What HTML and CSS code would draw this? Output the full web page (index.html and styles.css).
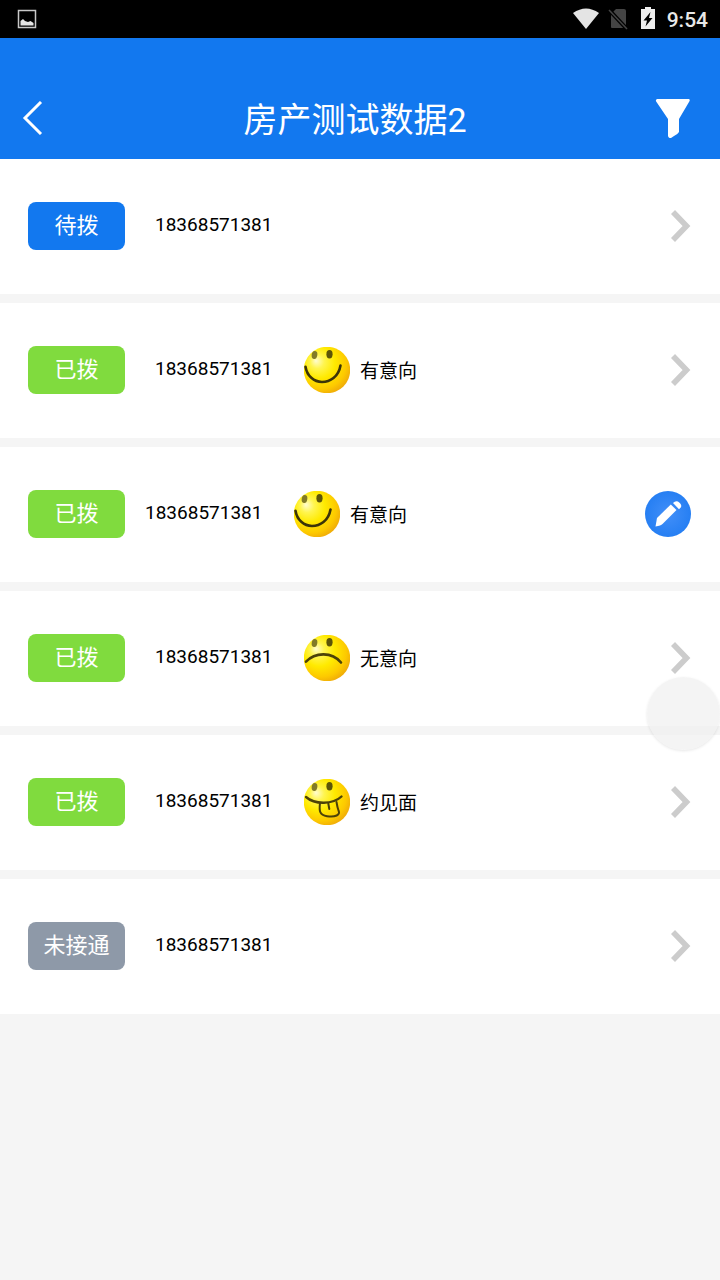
FILE: index.html
```html
<!DOCTYPE html>
<html lang="zh-CN">
<head>
<meta charset="utf-8">
<meta name="viewport" content="width=device-width, initial-scale=1">
<title>房产测试数据2</title>
<link rel="stylesheet" href="styles.css">
</head>
<body>
<svg class="defs" aria-hidden="true">
  <defs>
    <radialGradient id="face" cx="0.4" cy="0.38" r="0.68" fx="0.26" fy="0.3">
      <stop offset="0" stop-color="#fffcd0"/>
      <stop offset="0.22" stop-color="#fff550"/>
      <stop offset="0.5" stop-color="#ffea00"/>
      <stop offset="0.8" stop-color="#fdc900"/>
      <stop offset="1" stop-color="#eda60a"/>
    </radialGradient>
    <radialGradient id="pen">
      <stop offset="0" stop-color="#428ff8"/>
      <stop offset="1" stop-color="#267ff3"/>
    </radialGradient>
    <symbol id="chevron" viewBox="0 0 20 32">
      <path d="M2 2 15.500 16 2 30" fill="none" stroke="#ccc" stroke-width="5.600"/>
    </symbol>
    <symbol id="ball" viewBox="0 0 46 46">
      <circle cx="23" cy="23" r="23.2" fill="url(#face)"/>
      <ellipse cx="10.500" cy="8" rx="2.8" ry="4" fill="#817a28" transform="rotate(10 10.500 8)"/>
      <ellipse cx="25.500" cy="7.200" rx="3.1" ry="4.2" fill="#5c5408"/>
    </symbol>
    <symbol id="smile" viewBox="0 0 46 46">
      <use href="#ball"/>
      <path d="M1.500 19.700C3 29 10 35 18 35S34.500 30 36.500 18.500" fill="none" stroke="#3c3408" stroke-width="2.6" stroke-linecap="round"/>
    </symbol>
    <symbol id="frown" viewBox="0 0 46 46">
      <use href="#ball"/>
      <path d="M2 26.700C11 17 28 16.500 37 27.500" fill="none" stroke="#4c4208" stroke-width="2.6" stroke-linecap="round"/>
    </symbol>
    <symbol id="tongue" viewBox="0 0 46 46">
      <use href="#ball"/>
      <g fill="none" stroke="#4c4208" stroke-width="2.4" stroke-linecap="round">
        <path d="M2 18C11 26 29 25.500 37.500 17.500"/>
        <path d="M16 24C15 32 15.500 36 23 37.200 31 38.500 37 36 34.500 31.500 33.500 29 33 26 32.500 23M24.300 24.500 25.300 30" stroke-width="2"/>
      </g>
    </symbol>
  </defs>
</svg>

<div class="status">
  <svg class="status-photo" width="20" height="20" viewBox="0 0 20 20" aria-hidden="true">
    <path d="M1.500 1.500h17v17h-17z" fill="none" stroke="#c8c8c8" stroke-width="1.500"/>
    <path d="M3.500 16.500v-4.500l2.500-2 2 2 3 1 2.500-1 3 2v2.500z" fill="#e6e6e6"/>
  </svg>
  <svg width="28" height="24" viewBox="0 0 28 24" aria-hidden="true">
    <path d="M1 6Q14-3 27 6L14 22z" fill="#e4e4e4"/>
  </svg>
  <svg width="20" height="24" viewBox="0 0 20 24" aria-hidden="true">
    <path d="M8 2h8q2 0 2 2v16q0 1-1 1H4q-1 0-1-1V7z" fill="#444"/>
    <path d="M1 3 19 22" stroke="#000" stroke-width="4"/>
    <path d="M1 3 19 22" stroke="#444" stroke-width="1.500"/>
  </svg>
  <svg class="status-battery" width="16" height="24" viewBox="0 0 16 24" aria-hidden="true">
    <path d="M5 0h6v2h4v20H1V2h4z" fill="#eee"/>
    <path d="M10.500 5 3.500 13.500h3.500L5.500 19.500 12.500 11H9z" fill="#000"/>
  </svg>
  <time class="clock">9:54</time>
</div>

<header class="header">
  <button class="icon-button back" type="button" aria-label="返回">
    <svg width="22" height="34" viewBox="0 0 22 34"><path d="M20 1 4 17l16 16" fill="none" stroke="#fff" stroke-width="3"/></svg>
  </button>
  <h1 class="title">房产测试数据2</h1>
  <button class="icon-button" type="button" aria-label="筛选">
    <svg width="36" height="40" viewBox="0 0 36 40"><path d="M2 1h32q1.500 1 0 3L24 21v13q-1 2-5 4l-3 2q-2.500.500-3-2V21L1.500 4Q0 2 2 1z" fill="#fff"/></svg>
  </button>
</header>

<main>
  <ul class="list">
    <li class="row">
      <span class="badge badge-pending">待拨</span>
      <span class="phone">18368571381</span>
      <button class="action" type="button" aria-label="查看"><svg width="20" height="32"><use href="#chevron"/></svg></button>
    </li>
    <li class="row">
      <span class="badge badge-called">已拨</span>
      <span class="phone">18368571381</span>
      <span class="intent"><svg width="46" height="46" aria-hidden="true"><use href="#smile"/></svg><span class="intent-label">有意向</span></span>
      <button class="action" type="button" aria-label="查看"><svg width="20" height="32"><use href="#chevron"/></svg></button>
    </li>
    <li class="row row-edit">
      <span class="badge badge-called">已拨</span>
      <span class="phone">18368571381</span>
      <span class="intent"><svg width="46" height="46" aria-hidden="true"><use href="#smile"/></svg><span class="intent-label">有意向</span></span>
      <button class="action" type="button" aria-label="编辑">
        <svg width="46" height="46" viewBox="0 0 46 46">
          <circle cx="23" cy="23" r="23" fill="url(#pen)"/>
          <path d="M10.500 35.500 12 27 25.800 13.500 31.500 19 17.500 33q-1.500 1.500-7 2.500z" fill="#fff"/>
          <path d="m28 12 1.700-1.200q2.300-1.300 4.800 1 2.800 2.800 1.200 4.800l-1.700 1.700z" fill="#fff"/>
        </svg>
      </button>
    </li>
    <li class="row">
      <span class="badge badge-called">已拨</span>
      <span class="phone">18368571381</span>
      <span class="intent"><svg width="46" height="46" aria-hidden="true"><use href="#frown"/></svg><span class="intent-label">无意向</span></span>
      <button class="action" type="button" aria-label="查看"><svg width="20" height="32"><use href="#chevron"/></svg></button>
    </li>
    <li class="row">
      <span class="badge badge-called">已拨</span>
      <span class="phone">18368571381</span>
      <span class="intent"><svg width="46" height="46" aria-hidden="true"><use href="#tongue"/></svg><span class="intent-label">约见面</span></span>
      <button class="action" type="button" aria-label="查看"><svg width="20" height="32"><use href="#chevron"/></svg></button>
    </li>
    <li class="row">
      <span class="badge badge-missed">未接通</span>
      <span class="phone">18368571381</span>
      <button class="action" type="button" aria-label="查看"><svg width="20" height="32"><use href="#chevron"/></svg></button>
    </li>
  </ul>
</main>
<button class="floating" type="button" aria-label="悬浮按钮"></button>
</body>
</html>
```
FILE: styles.css
```css
* {
  box-sizing: border-box;
}

body {
  margin: 0;
  min-height: 100vh;
  background: #f5f5f5;
  color: #000;
  font-family: Roboto, "Noto Sans CJK SC", sans-serif;
}

button {
  padding: 0;
  border: 0;
  background: none;
  cursor: pointer;
}

svg {
  display: block;
  flex: none;
}

.defs {
  position: absolute;
  width: 0;
  height: 0;
}

.status {
  display: flex;
  align-items: center;
  gap: 8px;
  height: 38px;
  padding: 0 12px 0 17px;
  background: #000;
}

.status-photo {
  margin-right: auto;
}

.status-battery {
  margin-left: 4px;
}

.clock {
  margin-left: 3px;
  padding-top: 1px;
  color: #e8e8e8;
  font-size: 21px;
  font-weight: 500;
  line-height: 24px;
}

.header {
  display: flex;
  align-items: center;
  justify-content: space-between;
  height: 121px;
  padding: 38px 29px 0 21px;
  background: #1278ef;
}

.icon-button {
  display: flex;
}

.back {
  width: 34px;
}

.title {
  margin: 0;
  padding-top: 4px;
  color: #fff;
  font-size: 34px;
  font-weight: 400;
  line-height: 48px;
}

.list {
  display: grid;
  gap: 9px;
  margin: 0;
  padding: 0;
  list-style: none;
}

.row {
  display: flex;
  align-items: center;
  gap: 30px;
  height: 135px;
  padding: 0 29px 1px 28px;
  background: #fff;
}

.row-edit .badge {
  margin-right: -10px;
}

.badge {
  width: 97px;
  height: 48px;
  border-radius: 8px;
  color: #fff;
  font-size: 22px;
  line-height: 48px;
  text-align: center;
}

.badge-pending {
  background: #1278ef;
}

.badge-called {
  background: #80db3e;
}

.badge-missed {
  background: #8e99a8;
}

.phone {
  width: 119px;
  padding-bottom: 3px;
  font-size: 19px;
  line-height: 24px;
}

.intent {
  display: flex;
  align-items: center;
  gap: 10px;
  font-size: 19px;
  line-height: 28px;
}

.intent-label {
  padding-top: 3px;
}

.action {
  margin-left: auto;
}

.floating {
  position: fixed;
  top: 677px;
  right: 0;
  width: 73px;
  height: 73px;
  border-radius: 50%;
  background: rgba(238, 238, 238, 0.65);
  box-shadow: 0 1px 3px rgba(0, 0, 0, 0.1);
}
```
